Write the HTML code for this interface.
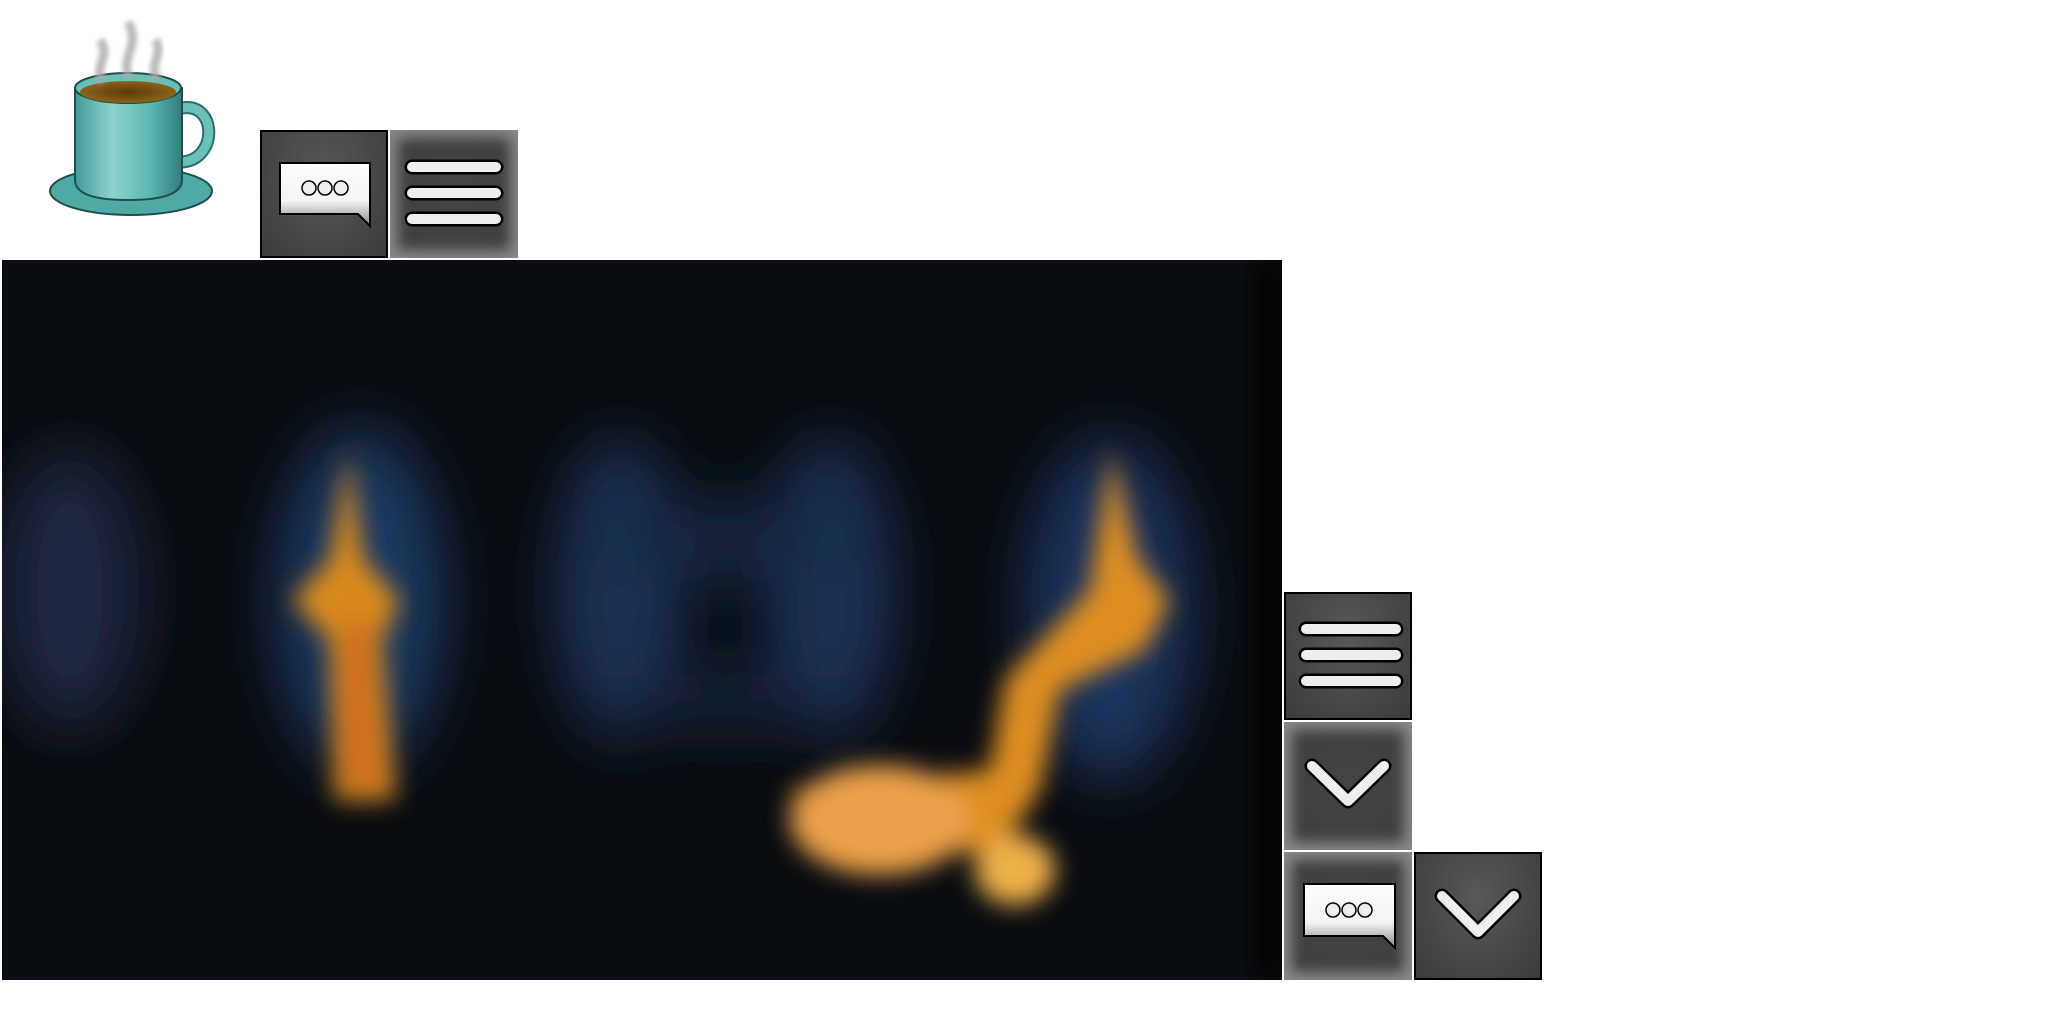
<!DOCTYPE html>
<html><head><meta charset="utf-8"><style>
html,body{margin:0;padding:0;background:#fff;width:2048px;height:1024px;overflow:hidden;position:relative;font-family:"Liberation Sans",sans-serif}
.b{position:absolute;width:128px;height:128px;box-sizing:border-box}
.b1{border:2px solid #000;background:radial-gradient(ellipse at 50% 35%,#595959 0%,#464646 60%,#3c3c3c 100%)}
.b2{background:#444;box-shadow:inset 0 0 14px 8px #8a8a8a, inset 0 0 30px 14px #3a3a3a}
.b svg{position:absolute;left:0;top:0}
</style></head><body>
<svg width="2048" height="1024" style="position:absolute;left:0;top:0">
<defs>
<linearGradient id="cup" x1="0" x2="1"><stop offset="0" stop-color="#3f9c98"/><stop offset=".35" stop-color="#8fd3cd"/><stop offset=".7" stop-color="#5cb8b2"/><stop offset="1" stop-color="#2f7f7b"/></linearGradient>
<radialGradient id="cof"><stop offset="0" stop-color="#5a3a0a"/><stop offset="1" stop-color="#8a6418"/></radialGradient>
<filter id="bl" x="-50%" y="-50%" width="200%" height="200%"><feGaussianBlur stdDeviation="12"/></filter>
<filter id="bl2" x="-50%" y="-50%" width="200%" height="200%"><feGaussianBlur stdDeviation="30"/></filter>
<filter id="st"><feGaussianBlur stdDeviation="2.5"/></filter>
<clipPath id="ic"><rect x="2" y="260" width="1280" height="720"/></clipPath>
</defs>
<!-- cup -->
<ellipse cx="131" cy="191" rx="81" ry="24" fill="#4fa9a4" stroke="#1f4f4c" stroke-width="2"/>
<path d="M182 108 C218 102 218 162 180 162" fill="none" stroke="#2a6e6a" stroke-width="13"/>
<path d="M182 108 C218 102 218 162 180 162" fill="none" stroke="#6cc0ba" stroke-width="9"/>
<path d="M75 88 L75 180 Q75 200 128 200 Q182 200 182 180 L182 88 Z" fill="url(#cup)" stroke="#1f4f4c" stroke-width="2"/>
<ellipse cx="128" cy="88" rx="53" ry="15" fill="#6cbfb9" stroke="#1f4f4c" stroke-width="2"/>
<ellipse cx="128" cy="92" rx="48" ry="11" fill="url(#cof)"/>
<g fill="none" stroke="#aaa" stroke-width="9" filter="url(#st)" opacity=".8">
<path d="M103 82 C92 65 112 58 100 40"/><path d="M130 78 C118 58 142 46 128 22"/><path d="M157 80 C148 62 165 54 155 40"/></g>
<!-- image -->
<g clip-path="url(#ic)">
<rect x="2" y="260" width="1280" height="720" fill="#0a0d12"/>
<rect x="1255" y="260" width="27" height="720" fill="#020203" filter="url(#bl)"/>
<g filter="url(#bl2)">
<ellipse cx="360" cy="600" rx="80" ry="170" fill="#1d3a66"/>
<ellipse cx="620" cy="590" rx="60" ry="150" fill="#1a3058"/>
<ellipse cx="830" cy="590" rx="60" ry="150" fill="#1a3058"/>
<ellipse cx="725" cy="540" rx="120" ry="40" fill="#182640"/>
<ellipse cx="725" cy="700" rx="120" ry="30" fill="#152238"/>
<ellipse cx="1110" cy="610" rx="80" ry="170" fill="#1d3560"/>
<ellipse cx="70" cy="590" rx="70" ry="140" fill="#1a2840"/>
</g>
<g filter="url(#bl)">
<path d="M348 450 L364 560 L400 600 L382 640 L395 800 L335 800 L330 640 L292 600 L330 560 Z" fill="#d98a1e"/>
<path d="M345 620 L370 620 L380 790 L345 790 Z" fill="#c9601a" opacity=".7"/>
<path d="M1111 450 L1138 560 L1170 600 L1145 650 L1060 690 L1040 790 L1000 850 L820 860 L790 790 L990 770 L1005 680 L1090 590 Z" fill="#df8f22"/>
<ellipse cx="880" cy="820" rx="90" ry="55" fill="#eaa04a"/>
<ellipse cx="1015" cy="870" rx="40" ry="35" fill="#efb04a"/>
</g>
</g>
</svg>

<div class="b b1" style="left:260px;top:130px"><svg width="124" height="124"><defs><linearGradient id="w" x1="0" y1="0" x2="0" y2="1"><stop offset="0" stop-color="#fff"/><stop offset=".6" stop-color="#f4f4f4"/><stop offset="1" stop-color="#888"/></linearGradient></defs><path d="M18 31 H108 V94 L96 82 H18 Z" fill="url(#w)" stroke="#000" stroke-width="2"/><circle cx="47" cy="56" r="7" fill="#eee" stroke="#000" stroke-width="1.5"/><circle cx="63" cy="56" r="7" fill="#eee" stroke="#000" stroke-width="1.5"/><circle cx="79" cy="56" r="7" fill="#eee" stroke="#000" stroke-width="1.5"/></svg></div>
<div class="b b2" style="left:390px;top:130px"><svg width="128" height="128"><g stroke="#000" stroke-width="15" stroke-linecap="round"><path d="M22 37H106M22 63H106M22 89H106"/></g><g stroke="#eee" stroke-width="10" stroke-linecap="round"><path d="M22 37H106M22 63H106M22 89H106"/></g></svg></div>

<div class="b b1" style="left:1284px;top:592px"><svg width="124" height="124"><g stroke="#000" stroke-width="15" stroke-linecap="round"><path d="M20 35H110M20 61H110M20 87H110"/></g><g stroke="#eee" stroke-width="10" stroke-linecap="round"><path d="M20 35H110M20 61H110M20 87H110"/></g></svg></div>
<div class="b b2" style="left:1284px;top:722px"><svg width="128" height="128"><path d="M28 44 L64 79 L100 44" fill="none" stroke="#000" stroke-width="15" stroke-linecap="round" stroke-linejoin="round"/><path d="M28 44 L64 79 L100 44" fill="none" stroke="#eee" stroke-width="10" stroke-linecap="round" stroke-linejoin="round"/></svg></div>
<div class="b b2" style="left:1284px;top:852px"><svg width="128" height="128"><defs><linearGradient id="w2" x1="0" y1="0" x2="0" y2="1"><stop offset="0" stop-color="#fff"/><stop offset=".6" stop-color="#f4f4f4"/><stop offset="1" stop-color="#888"/></linearGradient></defs><path d="M20 32 H111 V96 L99 84 H20 Z" fill="url(#w2)" stroke="#000" stroke-width="2"/><circle cx="49" cy="58" r="7" fill="#eee" stroke="#000" stroke-width="1.5"/><circle cx="65" cy="58" r="7" fill="#eee" stroke="#000" stroke-width="1.5"/><circle cx="81" cy="58" r="7" fill="#eee" stroke="#000" stroke-width="1.5"/></svg></div>
<div class="b b1" style="left:1414px;top:852px"><svg width="124" height="124"><path d="M26 42 L62 78 L98 42" fill="none" stroke="#000" stroke-width="15" stroke-linecap="round" stroke-linejoin="round"/><path d="M26 42 L62 78 L98 42" fill="none" stroke="#eee" stroke-width="10" stroke-linecap="round" stroke-linejoin="round"/></svg></div>
</body></html>
